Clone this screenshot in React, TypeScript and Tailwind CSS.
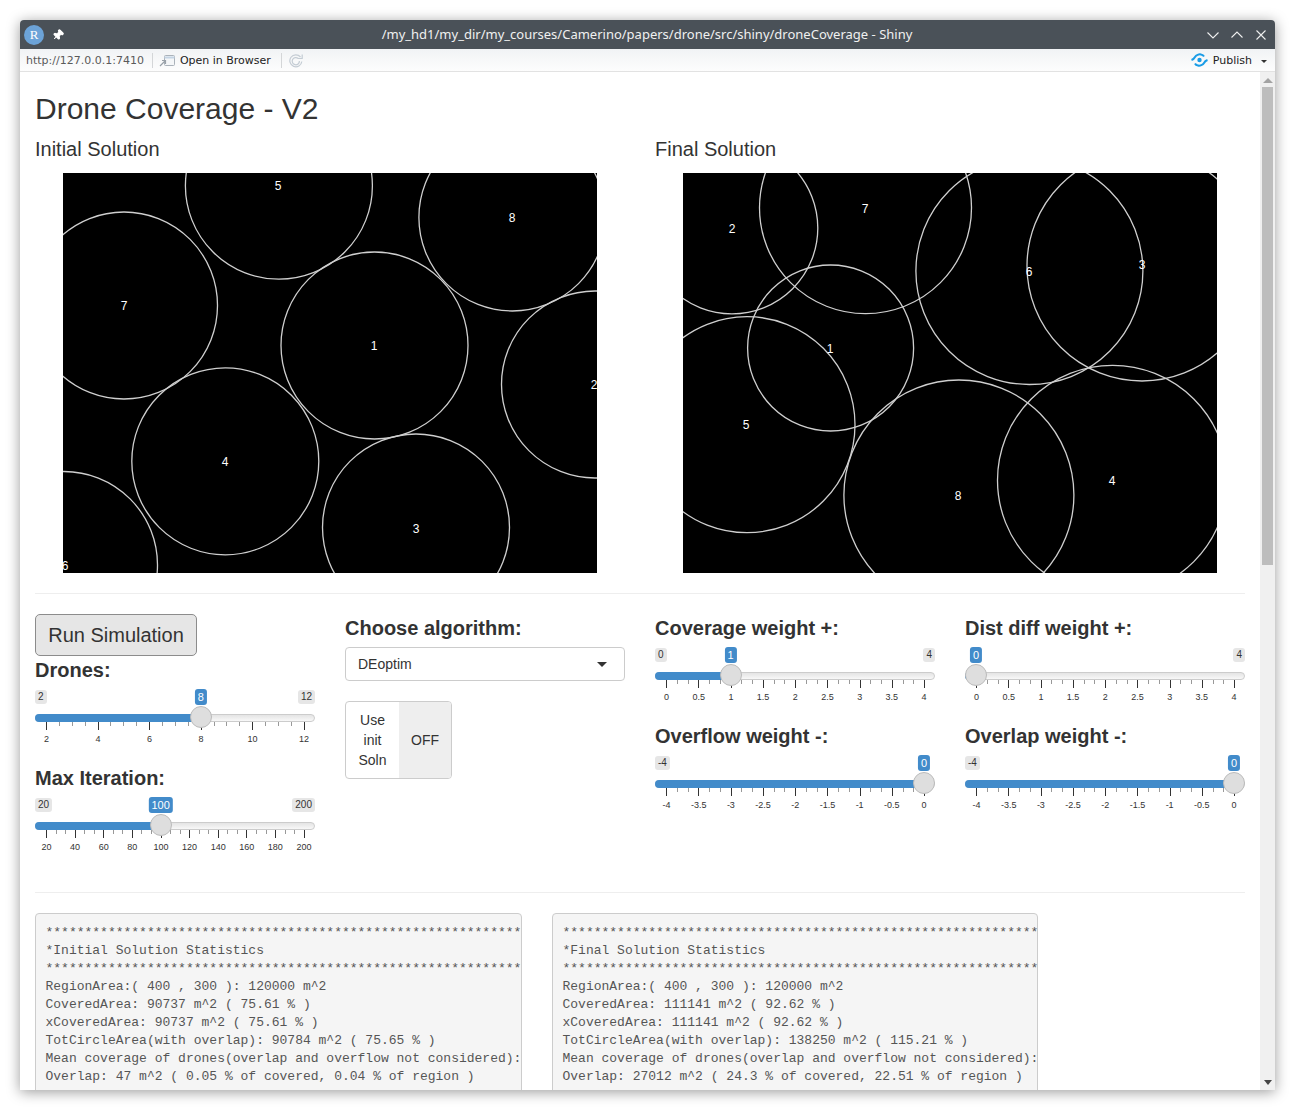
import React from "react";
import { Pin } from "lucide-react";

type SliderProps = {
  label: string;
  min: string;
  max: string;
  value: string;
  frac: number;
  labels: string[];
  minors: number;
};

function Slider({ label, min, max, value, frac, labels, minors }: SliderProps) {
  const ticks: boolean[] = [];
  labels.forEach((_, i) => {
    ticks.push(true);
    if (i < labels.length - 1) for (let k = 0; k < minors; k++) ticks.push(false);
  });
  const cx = 11 + frac * 258;
  return (
    <div className="h-[108px] pt-[3px]">
      <div className="h-[22px] text-[20px] leading-[22px] font-bold text-[#333]">{label}</div>
      <div className="relative mt-[8px] h-[60px]">
        <div className="flex justify-between pt-px">
          <span className={frac === 0 ? "invisible h-[14px] px-[3px] text-[10px] leading-[14px]" : "h-[14px] rounded-[3px] bg-[#e6e6e6] px-[3px] text-[10px] leading-[14px] text-[#333]"}>{min}</span>
          <span className={frac === 1 ? "invisible h-[14px] px-[3px] text-[10px] leading-[14px]" : "h-[14px] rounded-[3px] bg-[#e6e6e6] px-[3px] text-[10px] leading-[14px] text-[#333]"}>{max}</span>
        </div>
        <div
          className="absolute top-0 h-[16px] -translate-x-1/2 rounded-[3px] bg-[#428bca] px-[3px] text-[11px] leading-[16px] text-white"
          style={{ left: cx }}
        >
          {value}
        </div>
        <div className="mt-[10px] h-[8px] rounded-full border border-[#ccc] bg-gradient-to-b from-[#e4e4e4] to-[#f8f8f8]" />
        <div className="absolute left-0 top-[25px] h-[8px] rounded-l-full bg-[#428bca]" style={{ width: cx }} />
        <div
          className="absolute top-[17px] h-[22px] w-[22px] -translate-x-1/2 rounded-full border border-[#bbb] bg-[#dedede]"
          style={{ left: cx }}
        />
        <div className="mx-[11px] flex h-[8px] justify-between">
          {ticks.map((major, i) => (
            <div key={i} className="w-0">
              <div className={major ? "h-[8px] w-px bg-[#333]" : "h-[4px] w-px bg-[#999]"} />
            </div>
          ))}
        </div>
        <div className="ml-[11.5px] mr-[11px] mt-[3px] flex h-[12px] justify-between">
          {labels.map((t) => (
            <div key={t} className="flex w-0 justify-center whitespace-nowrap text-[9px] leading-[12px] text-[#333]">
              {t}
            </div>
          ))}
        </div>
      </div>
    </div>
  );
}

type C = [number, number, number];

function Plot({ circles, labels }: { circles: C[]; labels: [string, number, number][] }) {
  return (
    <svg viewBox="0 0 534 400" className="mx-auto block h-[400px] w-[534px] bg-black">
      {circles.map(([x, y, r], i) => (
        <circle key={i} cx={x} cy={y} r={r} fill="none" stroke="#cfcfcf" strokeWidth="1.3" />
      ))}
      {labels.map(([t, x, y]) => (
        <text key={t} x={x} y={y + 4} textAnchor="middle" fontSize="12" fill="#fff" fontFamily="Liberation Sans, sans-serif">
          {t}
        </text>
      ))}
    </svg>
  );
}

const left: C[] = [
  [311.5, 172.5, 93.5],
  [532, 211.5, 93.5],
  [353, 354.5, 93.5],
  [162.3, 288.3, 93.5],
  [215.9, 12.7, 93.5],
  [1, 392, 93.5],
  [61, 132.5, 93.5],
  [449.4, 44.5, 93.5],
];
const leftLabels: [string, number, number][] = [
  ["1", 311, 173],
  ["2", 531, 212],
  ["3", 353, 356],
  ["4", 162, 289],
  ["5", 215, 13],
  ["6", 2, 393],
  ["7", 61, 133],
  ["8", 449, 45],
];
const right: C[] = [
  [147.6, 175, 83],
  [49, 55, 85.8],
  [459, 93, 115],
  [429.5, 307.3, 115],
  [64, 251.7, 108],
  [346.4, 98, 113.5],
  [182.5, 34.7, 106],
  [275.9, 322, 115],
];
const rightLabels: [string, number, number][] = [
  ["1", 147, 176],
  ["2", 49, 56],
  ["3", 459, 92],
  ["4", 429, 308],
  ["5", 63, 252],
  ["6", 346, 99],
  ["7", 182, 36],
  ["8", 275, 323],
];

const stars = "*".repeat(80);
const pre1 = `${stars}
*Initial Solution Statistics
${stars}
RegionArea:( 400 , 300 ): 120000 m^2
CoveredArea: 90737 m^2 ( 75.61 % )
xCoveredArea: 90737 m^2 ( 75.61 % )
TotCircleArea(with overlap): 90784 m^2 ( 75.65 % )
Mean coverage of drones(overlap and overflow not considered):
Overlap: 47 m^2 ( 0.05 % of covered, 0.04 % of region )`;
const pre2 = `${stars}
*Final Solution Statistics
${stars}
RegionArea:( 400 , 300 ): 120000 m^2
CoveredArea: 111141 m^2 ( 92.62 % )
xCoveredArea: 111141 m^2 ( 92.62 % )
TotCircleArea(with overlap): 138250 m^2 ( 115.21 % )
Mean coverage of drones(overlap and overflow not considered):
Overlap: 27012 m^2 ( 24.3 % of covered, 22.51 % of region )`;

const posW = ["0", "0.5", "1", "1.5", "2", "2.5", "3", "3.5", "4"];
const negW = ["-4", "-3.5", "-3", "-2.5", "-2", "-1.5", "-1", "-0.5", "0"];

export default function App() {
  return (
    <div className="h-[1110px] overflow-hidden bg-white p-5 font-['Liberation_Sans',Arial,sans-serif] text-[14px] text-[#333]">
      <div className="flex h-[1070px] w-[1255px] flex-col overflow-hidden rounded-t-[4px] bg-white shadow-[0_2px_14px_rgba(0,0,0,0.4)]">
        {/* title bar */}
        <div className="relative flex h-[29px] shrink-0 items-center bg-[#4a5158] pl-[4px] pr-[8px] text-white">
          <div className="flex h-[20px] w-[20px] items-center justify-center rounded-full bg-[#6ca3d8] font-['Liberation_Serif',serif] text-[13px] leading-none">
            R
          </div>
          <Pin size={12} fill="#fff" stroke="#fff" className="ml-[8px] rotate-45" />
          <div className="ml-[23px] flex-1 text-center font-['Noto_Sans',sans-serif] text-[13px] text-[#f0f0f0]">
            /my_hd1/my_dir/my_courses/Camerino/papers/drone/src/shiny/droneCoverage - Shiny
          </div>
          <div className="flex items-center gap-[12px]">
            <svg width="12" height="12" viewBox="0 0 12 12" fill="none" stroke="#eee" strokeWidth="1.1">
              <path d="M0.5 3.5 L6 9 L11.5 3.5" />
            </svg>
            <svg width="12" height="12" viewBox="0 0 12 12" fill="none" stroke="#eee" strokeWidth="1.1">
              <path d="M0.5 8.5 L6 3 L11.5 8.5" />
            </svg>
            <svg width="12" height="12" viewBox="0 0 12 12" fill="none" stroke="#eee" strokeWidth="1.1">
              <path d="M1.5 1.5 L10.5 10.5 M10.5 1.5 L1.5 10.5" />
            </svg>
          </div>
        </div>
        {/* toolbar */}
        <div className="flex h-[23px] shrink-0 items-center border-b border-[#e2e2e2] bg-gradient-to-b from-[#f1f3f5] to-[#fdfdfd] pl-[6px] pr-[6px] font-['DejaVu_Sans',sans-serif] text-[11px]">
          <span className="pt-[2px] text-[#5a5a5a]">http://127.0.0.1:7410</span>
          <div className="ml-[8px] h-[15px] w-px bg-[#d4d6d8]" />
          <svg width="16" height="14" viewBox="0 0 16 14" className="ml-[6px]" fill="none">
            <rect x="5.5" y="2.5" width="10" height="10" rx="1" fill="#f4f6f8" stroke="#aab2ba" />
            <path d="M5.5 4.5 H15.5" stroke="#c4d4e4" strokeWidth="2" />
            <path d="M1 13 L6 8 M3 7.5 H6.5 V11" stroke="#98a0a8" strokeWidth="1.2" />
          </svg>
          <span className="ml-[5px] pt-[2px] text-[#222]">Open in Browser</span>
          <div className="ml-[10px] h-[15px] w-px bg-[#d4d6d8]" />
          <svg width="16" height="16" viewBox="0 0 16 16" className="ml-[6px]" fill="none" stroke="#c4ccd4">
            <path d="M12.5 5 A6 6 0 1 0 13.8 9.5" strokeWidth="1.2" />
            <path d="M10.2 6.5 A3.6 3.6 0 1 0 11.4 9" strokeWidth="1.2" />
            <path d="M10 6.5 H14.2 V2.5" strokeWidth="1.2" />
          </svg>
          <div className="flex-1" />
          <svg width="17" height="14" viewBox="0 0 17 14" fill="none" stroke="#1a9ce6" strokeWidth="2">
            <path d="M0.5 7 C2 6.5 3 6 4 4 C5 2 8 1 10 1.5 C11.5 1.8 12.5 2.5 13 3.5" />
            <path d="M16.5 7 C15 7.5 14 8 13 10 C12 12 9 13 7 12.5 C5.5 12.2 4.5 11.5 4 10.5" />
            <circle cx="8.5" cy="7" r="2.2" fill="#1a9ce6" stroke="none" />
          </svg>
          <span className="ml-[5px] pt-[2px] text-[#222]">Publish</span>
          <div className="ml-[9px] mt-[2px] h-0 w-0 border-x-[3px] border-t-[3px] border-x-transparent border-t-[#333]" />
          <div className="w-[2px]" />
        </div>
        {/* body */}
        <div className="flex min-h-0 flex-1">
          <div className="min-w-0 flex-1 overflow-hidden px-[15px]">
            <h2 className="mt-[20px] text-[30px] font-normal leading-[33px]">Drone Coverage - V2</h2>
            <div className="mt-[13px] grid grid-cols-2 gap-[30px]">
              <div>
                <h4 className="text-[20px] font-normal leading-[22px]">Initial Solution</h4>
                <div className="mt-[13px]">
                  <Plot circles={left} labels={leftLabels} />
                </div>
              </div>
              <div>
                <h4 className="text-[20px] font-normal leading-[22px]">Final Solution</h4>
                <div className="mt-[13px]">
                  <Plot circles={right} labels={rightLabels} />
                </div>
              </div>
            </div>
            <hr className="mt-[20px] border-t border-[#eee]" />
            <div className="mt-[20px] grid h-[258px] grid-cols-4 gap-[30px]">
              <div>
                <button className="block h-[42px] w-[162px] rounded-[5px] border border-[#8c8c8c] bg-[#e6e6e6] text-[20px] text-[#333]">
                  Run Simulation
                </button>
                <Slider label="Drones:" min="2" max="12" value="8" frac={0.6} labels={["2", "4", "6", "8", "10", "12"]} minors={3} />
                <Slider
                  label="Max Iteration:"
                  min="20"
                  max="200"
                  value="100"
                  frac={80 / 180}
                  labels={["20", "40", "60", "80", "100", "120", "140", "160", "180", "200"]}
                  minors={2}
                />
              </div>
              <div>
                <div className="mt-[3px] h-[22px] text-[20px] font-bold leading-[22px]">Choose algorithm:</div>
                <div className="mt-[8px] flex h-[34px] items-center justify-between rounded-[4px] border border-[#ccc] bg-white pl-[12px] pr-[17px]">
                  <span>DEoptim</span>
                  <div className="h-0 w-0 border-x-[5px] border-t-[5px] border-x-transparent border-t-[#333]" />
                </div>
                <div className="mt-[20px] flex h-[78px] w-[107px] overflow-hidden rounded-[4px] border border-[#ccc]">
                  <div className="flex w-[53px] items-center justify-center text-center leading-[20px]">
                    Use
                    <br />
                    init
                    <br />
                    Soln
                  </div>
                  <div className="flex flex-1 items-center justify-center bg-[#eee]">OFF</div>
                </div>
              </div>
              <div>
                <Slider label="Coverage weight +:" min="0" max="4" value="1" frac={0.25} labels={posW} minors={2} />
                <Slider label="Overflow weight -:" min="-4" max="0" value="0" frac={1} labels={negW} minors={2} />
              </div>
              <div>
                <Slider label="Dist diff weight +:" min="0" max="4" value="0" frac={0} labels={posW} minors={2} />
                <Slider label="Overlap weight -:" min="-4" max="0" value="0" frac={1} labels={negW} minors={2} />
              </div>
            </div>
            <hr className="mt-[20px] border-t border-[#eee]" />
            <div className="mt-[20px] flex gap-[30px]">
              <pre className="h-[220px] w-[487px] shrink-0 overflow-hidden rounded-[4px] border border-[#ccc] bg-[#f5f5f5] px-[9.5px] pt-[10px] font-['Liberation_Mono',monospace] text-[13px] leading-[18px] text-[#555]">
                {pre1}
              </pre>
              <pre className="h-[220px] w-[486px] shrink-0 overflow-hidden rounded-[4px] border border-[#ccc] bg-[#f5f5f5] px-[9.5px] pt-[10px] font-['Liberation_Mono',monospace] text-[13px] leading-[18px] text-[#555]">
                {pre2}
              </pre>
            </div>
          </div>
          {/* scrollbar */}
          <div className="flex w-[15px] shrink-0 flex-col items-center bg-[#f0f0f0] px-[2px]">
            <div className="mt-[6px] h-0 w-0 border-x-[5px] border-b-[5px] border-x-transparent border-b-[#a3a3a3]" />
            <div className="mt-[4px] h-[478px] w-full bg-[#bdbdbd]" />
            <div className="flex-1" />
            <div className="mb-[5px] h-0 w-0 border-x-[4px] border-t-[5px] border-x-transparent border-t-[#444]" />
          </div>
        </div>
      </div>
    </div>
  );
}
